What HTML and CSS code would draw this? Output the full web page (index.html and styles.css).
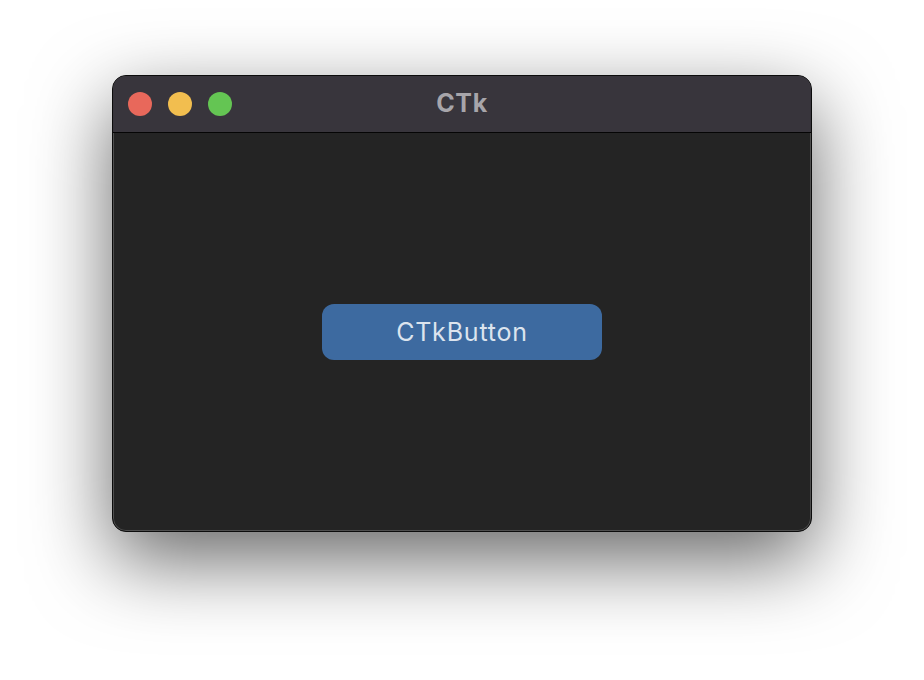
FILE: index.html
```html
<!DOCTYPE html>
<html lang="en">
<head>
    <meta charset="UTF-8">
    <title>CTk</title>
    <link rel="stylesheet" href="styles.css">
</head>
<body>
    <div class="desktop">
        <div class="window">
            <div class="titlebar">
                <div class="lights">
                    <span class="light red"></span>
                    <span class="light yellow"></span>
                    <span class="light green"></span>
                </div>
                <div class="title">CTk</div>
            </div>
            <div class="content">
                <button class="ctk-button">CTkButton</button>
            </div>
        </div>
    </div>
</body>
</html>
```

FILE: styles.css
```css
body {
    margin: 0;
    padding: 0;
    background-color: #ffffff;
    font-family: Inter, "Liberation Sans", sans-serif;
    overflow: hidden;
}

.desktop {
    width: 924px;
    height: 680px;
    display: flex;
    justify-content: center;
    align-items: flex-start;
    padding-top: 75px;
    box-sizing: border-box;
}

.window {
    width: 700px;
    height: 457px;
    box-sizing: border-box;
    border: 1px solid #0c0c0c;
    border-radius: 14px;
    background-color: #242424;
    box-shadow: inset 0 0 0 1px rgba(255, 255, 255, 0.2), 0 28px 80px rgba(0, 0, 0, 0.6);
    display: flex;
    flex-direction: column;
    overflow: hidden;
}

.titlebar {
    height: 56px;
    flex: none;
    background-color: #38353c;
    border-bottom: 1px solid #050505;
    position: relative;
    display: flex;
    align-items: center;
    justify-content: center;
}

.lights {
    position: absolute;
    left: 15px;
    top: 16px;
    display: flex;
    gap: 16px;
}

.light {
    width: 24px;
    height: 24px;
    border-radius: 50%;
    display: block;
}

.red { background-color: #e8685b; }
.yellow { background-color: #f2be4f; }
.green { background-color: #64c553; }

.title {
    color: #a7a5aa;
    font-weight: 700;
    font-size: 25px;
    letter-spacing: 0.6px;
    margin-top: -2px;
}

.content {
    flex: 1;
    display: flex;
    align-items: center;
    justify-content: center;
}

.ctk-button {
    width: 280px;
    height: 56px;
    border: none;
    border-radius: 12px;
    background-color: #3d6aa0;
    color: #dce4ee;
    font-family: Inter, "Liberation Sans", sans-serif;
    font-size: 25px;
    letter-spacing: 0.8px;
    cursor: pointer;
}
```
